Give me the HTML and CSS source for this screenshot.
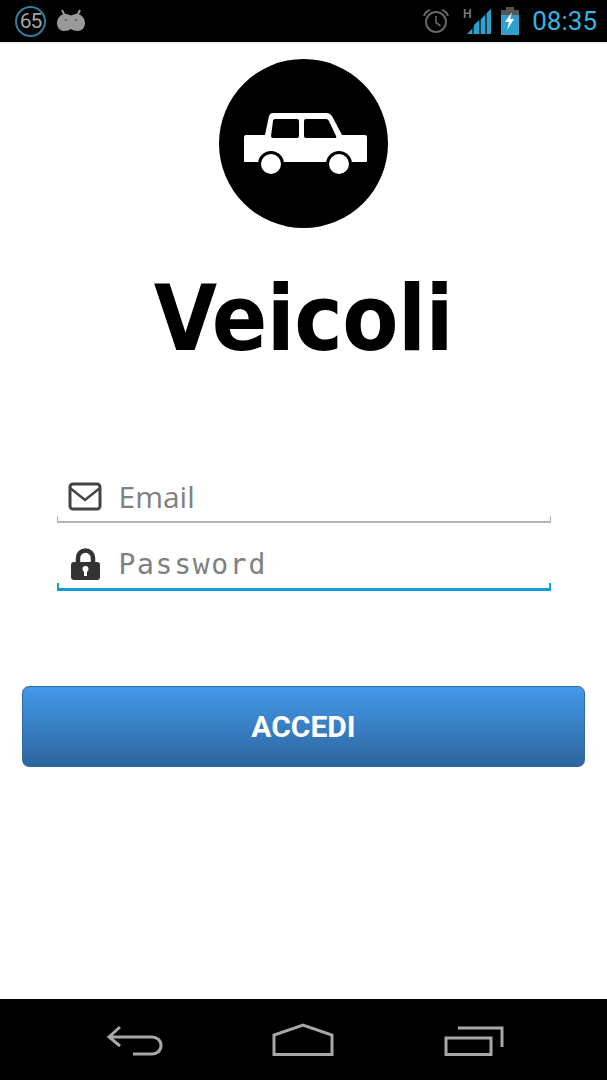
FILE: index.html
```html
<!DOCTYPE html>
<html lang="en">
<head>
    <meta charset="UTF-8">
    <meta name="viewport" content="width=device-width, initial-scale=1.0">
    <title>Veicoli</title>
    <link rel="stylesheet" href="styles.css">
</head>
<body>
    <div class="screen">
        <!-- Status bar -->
        <div class="status-bar">
            <div class="status-left">
                <div class="badge">65</div>
                <svg class="android" width="30" height="24" viewBox="0 0 30 24">
                    <path d="M6 1l3 6M24 1l-3 6" stroke="#999" stroke-width="2" fill="none"/>
                    <path d="M1 14c0-5 4-9 8-9 2.500 0 4.500.6 6 1.600C16.500 5.600 18.500 5 21 5c4 0 8 4 8 9 0 5-3.500 8-7 8-3 0-5.500-.8-7-2-1.500 1.200-4 2-7 2-3.500 0-7-3-7-8z" fill="#999"/>
                    <circle cx="10" cy="11" r="1" fill="#555"/>
                    <circle cx="20" cy="11" r="1" fill="#555"/>
                </svg>
            </div>
            <div class="status-right">
                <svg class="alarm" width="28" height="26" viewBox="0 0 28 26">
                    <circle cx="14" cy="14" r="10" stroke="#666" stroke-width="2" fill="none"/>
                    <path d="M14 8v6.500l4.500 3.500" stroke="#666" stroke-width="1.600" fill="none"/>
                    <path d="M2 8c1-3 3-5 6-6M26 8c-1-3-3-5-6-6" stroke="#666" stroke-width="2" fill="none"/>
                </svg>
                <svg class="signal" width="30" height="28" viewBox="0 0 30 28">
                    <text x="0" y="11" class="signal-h">H</text>
                    <path d="M4 27L28 1v26z" fill="#33b5e5" opacity="0.35"/>
                    <path d="M4 27l5-5v5zM11 27v-9l5-5v14zM18 27V12l4-4v19zM24 27V6l4-4v25z" fill="#2f9fcb"/>
                </svg>
                <svg class="battery" width="18" height="28" viewBox="0 0 18 28">
                    <path d="M5 0h8v3H5z" fill="#555"/>
                    <path d="M0 3h18v5H0z" fill="#555"/>
                    <path d="M0 8h18v20H0z" fill="#2f9fcb"/>
                    <path d="M11 5L4 15h4l-2 8 7-11H9z" fill="#fff"/>
                </svg>
                <span class="clock">08:35</span>
            </div>
        </div>

        <!-- Login form -->
        <div class="content">
            <div class="logo">
                <svg class="car" width="124" height="62" viewBox="0 0 124 62">
                    <path d="M21 22l4-19q1-3 4-3h54q3 0 5 3l10 19h23q2 0 2 2v24q0 1-1 1H1q-1 0-1-1V24q0-2 2-2z" fill="#fff"/>
                    <path d="M31 6h22q2 0 2 2v15q0 2-2 2H29q-2 0-2-2l2-15q0-2 2-2zM62 6h20q2 0 3 2l7 15q1 2-1 2H62q-2 0-2-2V8q0-2 2-2z" fill="#000"/>
                    <circle cx="27" cy="51" r="13" fill="#000"/>
                    <circle cx="95" cy="51" r="13" fill="#000"/>
                    <circle cx="27" cy="51" r="10" fill="#fff"/>
                    <circle cx="95" cy="51" r="10" fill="#fff"/>
                </svg>
            </div>
            <h1 class="title">Veicoli</h1>

            <div class="field field-email">
                <svg class="field-icon" width="34" height="30" viewBox="0 0 34 30">
                    <rect x="2" y="2" width="30" height="25" rx="3" stroke="#444" stroke-width="3" fill="none"/>
                    <path d="M2 6l15 12L32 6" stroke="#444" stroke-width="2.500" fill="none"/>
                </svg>
                <span class="field-label">Email</span>
            </div>
            <div class="field field-password">
                <svg class="field-icon" width="34" height="34" viewBox="0 0 34 34">
                    <path d="M10 17V11a7.500 7.500 0 0 1 15 0v6" stroke="#333" stroke-width="4.500" fill="none"/>
                    <rect x="3" y="15" width="29" height="18" rx="3" fill="#333"/>
                    <circle cx="17.500" cy="22" r="3" fill="#fff"/>
                    <path d="M16 23h3v6h-3z" fill="#fff"/>
                </svg>
                <span class="field-label mono">Password</span>
            </div>

            <button class="login-button">ACCEDI</button>
        </div>

        <!-- Navigation bar -->
        <div class="nav-bar">
            <svg class="nav-back" width="58" height="31" viewBox="0 0 58 31">
                <path d="M14 2L3 12l11 9M3 12h43c5 0 9 3.500 9 8.500s-4 8.500-9 8.500H27" stroke="#a8a8a8" stroke-width="3" fill="none"/>
            </svg>
            <svg width="62" height="33" viewBox="0 0 62 33">
                <path d="M2 31.500V12L31 2l29 10v19.500z" stroke="#a8a8a8" stroke-width="3" fill="none"/>
            </svg>
            <svg width="60" height="30" viewBox="0 0 60 30">
                <path d="M14 2h44v19" stroke="#a8a8a8" stroke-width="3" fill="none"/>
                <rect x="2" y="12" width="45" height="16.500" stroke="#a8a8a8" stroke-width="3" fill="none"/>
            </svg>
        </div>
    </div>
</body>
</html>
```

FILE: styles.css
```css
* {
    box-sizing: border-box;
}
body {
    margin: 0;
    background-color: #ffffff;
    font-family: "Open Sans", sans-serif;
}
.screen {
    width: 607px;
    height: 1080px;
    display: flex;
    flex-direction: column;
    overflow: hidden;
}
.status-bar {
    height: 42px;
    background-color: #000000;
    display: flex;
    justify-content: space-between;
    align-items: center;
    padding: 0 10px 0 15px;
}
.status-left {
    display: flex;
    align-items: center;
    gap: 10px;
}
.badge {
    width: 31px;
    height: 31px;
    border: 2px solid #2a7f9f;
    border-radius: 50%;
    color: #a6a6a6;
    font-family: Roboto, sans-serif;
    font-size: 21px;
    line-height: 27px;
    text-align: center;
    letter-spacing: -1px;
}
.status-right {
    display: flex;
    align-items: center;
}
.alarm {
    margin-right: 13px;
}
.signal {
    margin-right: 8px;
}
.signal-h {
    font-family: "Liberation Sans", sans-serif;
    font-size: 12px;
    font-weight: bold;
    fill: #777777;
}
.battery {
    margin-right: 13px;
}
.clock {
    color: #33b5e5;
    font-family: Roboto, sans-serif;
    font-size: 26px;
}
.content {
    flex: 1;
    display: flex;
    flex-direction: column;
    align-items: center;
    padding-top: 17px;
    box-shadow: inset 0 2px 2px -1px rgba(0, 0, 0, 0.1);
}
.logo {
    width: 169px;
    height: 169px;
    border-radius: 50%;
    background-color: #000000;
    display: flex;
    justify-content: center;
    align-items: center;
    padding-left: 4px;
}
.title {
    margin: 31px 0 0;
    height: 120px;
    font-family: "DejaVu Sans", sans-serif;
    font-size: 91px;
    font-stretch: condensed;
    font-weight: bold;
    line-height: 120px;
    letter-spacing: -0.500px;
    color: #000000;
}
.field {
    width: 494px;
    display: flex;
    align-items: center;
    border-style: solid;
    border-width: 0 1px 2px;
    padding: 0 0 7px 10px;
    border-image: linear-gradient(to bottom, transparent 86%, #b5b5b5 86%) 1;
}
.field-email {
    height: 44px;
    margin-top: 100px;
}
.field-password {
    height: 44px;
    margin-top: 24px;
    padding-left: 9px;
    border-width: 0 2px 3px;
    border-image: linear-gradient(to bottom, transparent 86%, #0f9fd6 86%) 1;
}
.field-icon {
    flex: none;
    margin-right: 17px;
}
.field-label {
    color: #808080;
    font-size: 30px;
}
.mono {
    font-family: "DejaVu Sans Mono", monospace;
    font-size: 28px;
    letter-spacing: 1.700px;
}
.login-button {
    width: 563px;
    height: 81px;
    margin-top: 95px;
    border: 1px solid #2f6ba3;
    border-radius: 7px;
    background: linear-gradient(to bottom, #4399ea, #2d659e);
    color: #ffffff;
    font-family: Roboto, sans-serif;
    font-size: 30px;
    font-weight: bold;
}
.nav-bar {
    height: 81px;
    background-color: #000000;
    display: flex;
    justify-content: center;
    align-items: flex-end;
    gap: 110px;
    padding-bottom: 24px;
}
.nav-back {
    margin-left: 2px;
    margin-right: -2px;
}
```
